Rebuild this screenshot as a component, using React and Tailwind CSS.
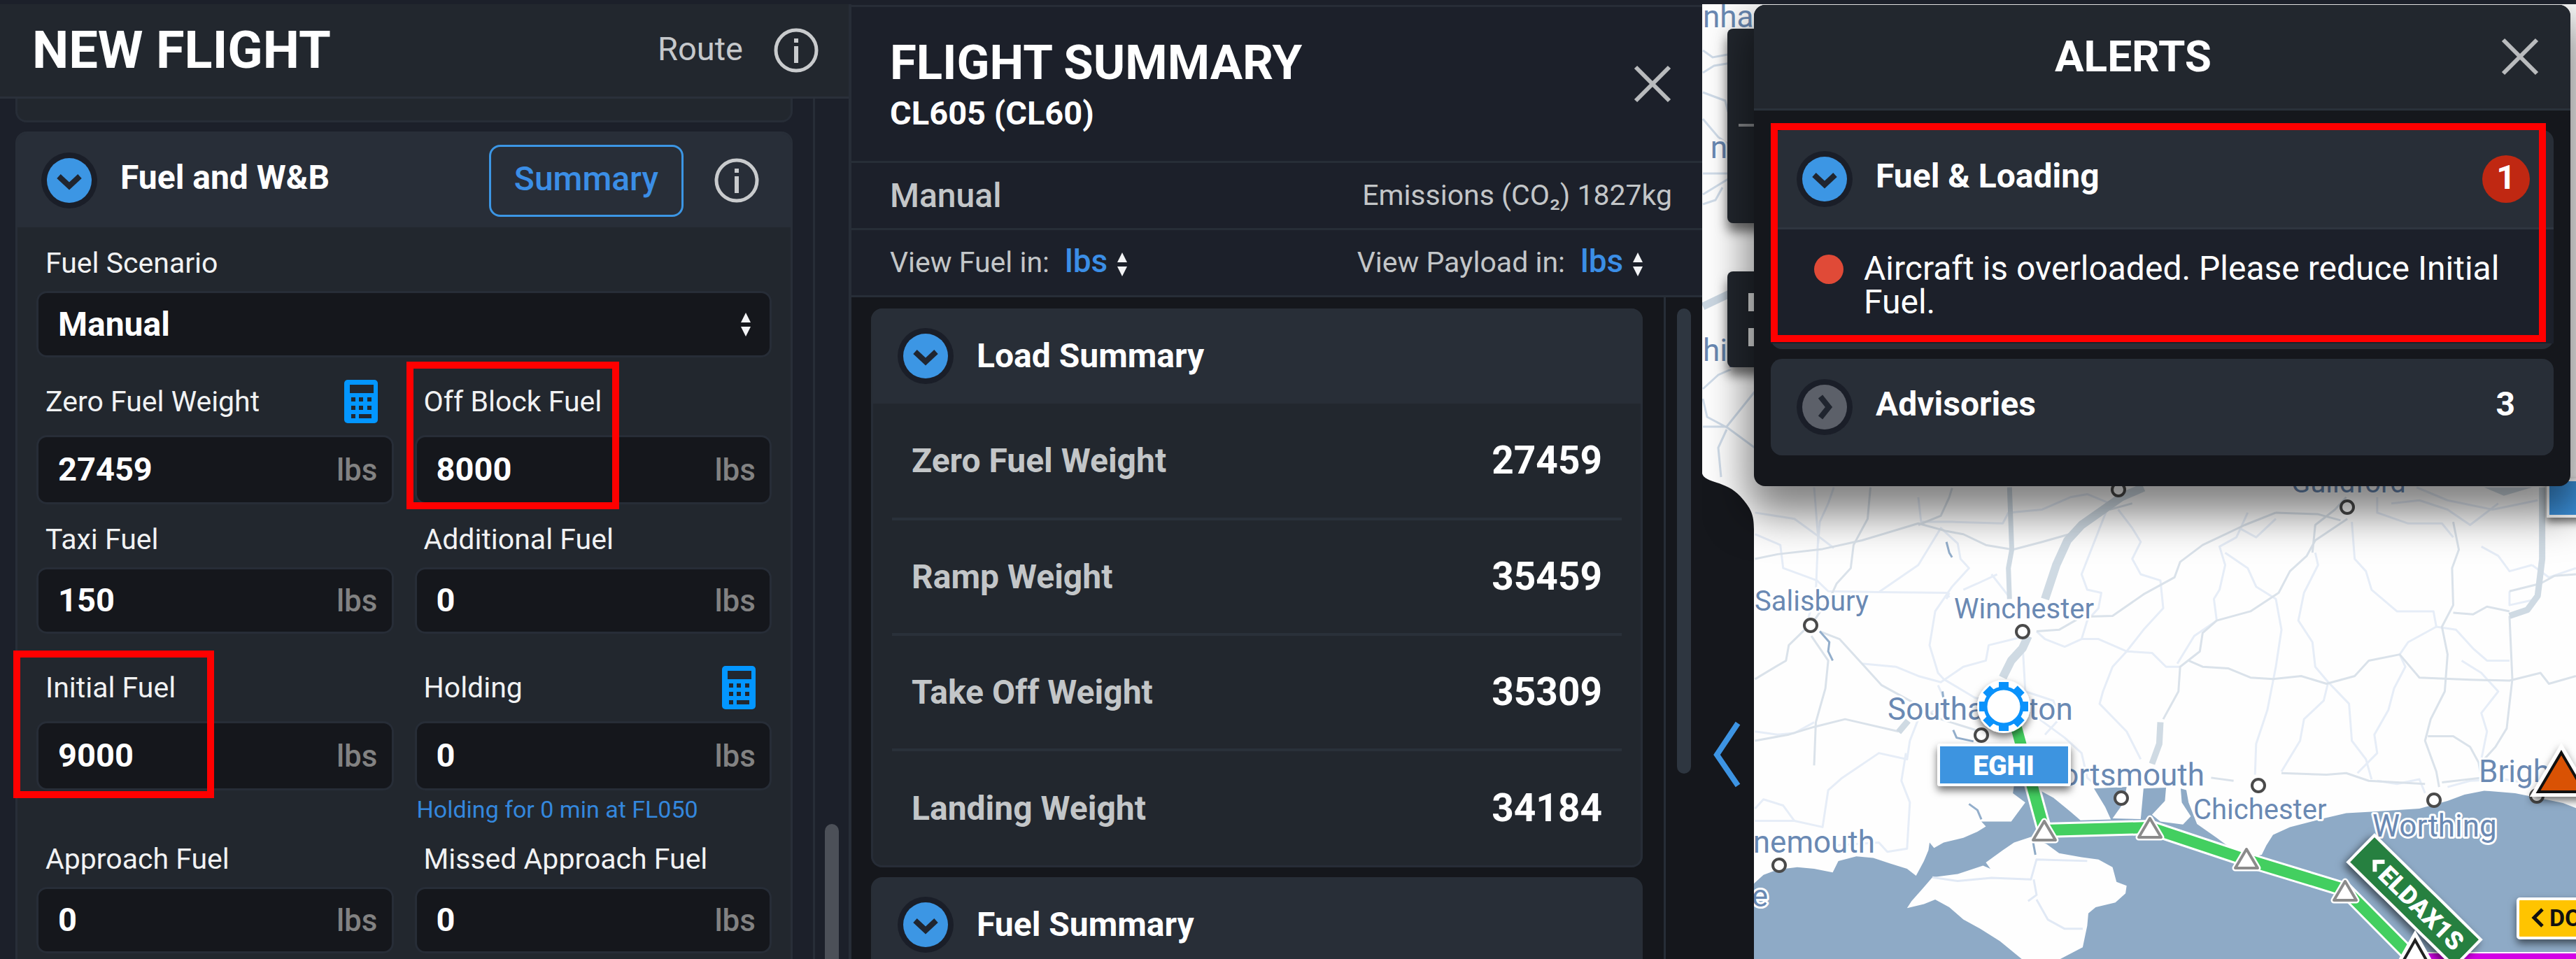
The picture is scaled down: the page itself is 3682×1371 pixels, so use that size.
import React from 'react';

function SortArrows() {
  return (
    <svg viewBox="0 0 16 34" className="pointer-events-none h-[34px] w-4 shrink-0" fill="#f3f4f6" aria-hidden="true">
      <path d="M8 0 L15 14 H1 Z M8 34 L15 20 H1 Z" />
    </svg>
  );
}

function InfoIcon() {
  return (
    <svg viewBox="0 0 66 66" className="size-[66px]" aria-hidden="true">
      <circle cx="33" cy="33" r="29" fill="none" stroke="#c9cbcd" strokeWidth="5" />
      <path d="M33 16 V22 M33 27 V51" stroke="#c9cbcd" strokeWidth="6" />
    </svg>
  );
}

function CloseIcon() {
  return (
    <svg viewBox="0 0 54 54" className="size-[54px]" aria-hidden="true">
      <path d="M3 3 L51 51 M51 3 L3 51" stroke="#b9bbbd" strokeWidth="6" />
    </svg>
  );
}

function Toggle({ open = true }) {
  return (
    <svg viewBox="0 0 80 80" className="size-20 shrink-0" aria-hidden="true">
      <circle cx="40" cy="40" r="40" fill="#1a1e28" />
      <circle cx="40" cy="40" r="32" fill={open ? '#3c96e4' : '#5c6069'} />
      <path d={open ? 'M25 34 L40 48 L55 34' : 'M34 25 L46 40 L34 55'} fill="none" stroke="#20252f" strokeWidth="8" />
    </svg>
  );
}

function Calculator() {
  return (
    <svg viewBox="0 0 48 62" className="h-[62px] w-12" aria-hidden="true">
      <rect width="48" height="62" rx="5" fill="#0396ff" />
      <rect x="8" y="7" width="34" height="12" fill="#22272f" />
      <g fill="#22272f">
        {[25, 37].map((y) => [10, 21, 33].map((x) => <rect key={`${x}-${y}`} x={x} y={y} width="6" height="6" />))}
        <rect x="10" y="49" width="6" height="6" />
        <rect x="21" y="49" width="18" height="6" />
      </g>
    </svg>
  );
}

function Field({ id, label, value, calc, tall, marked, note }) {
  return (
    <div className="relative">
      <div className={`mb-[19px] flex items-center justify-between pr-5 pl-2.5 ${tall ? 'h-16' : 'h-12'}`}>
        <label htmlFor={id} className="text-[41px] leading-[48px] whitespace-nowrap text-[#f1f2f3]">{label}</label>
        {calc && <button type="button" aria-label={`${label} calculator`}><Calculator /></button>}
      </div>
      <div className={`flex items-center rounded-xl bg-[#15171c] pr-5 pl-7 ring-3 ring-[#272d37] ${tall ? 'h-[93px]' : 'h-[89px]'}`}>
        <input id={id} defaultValue={value} className="min-w-0 flex-1 bg-transparent text-[47px] font-bold text-white outline-none" />
        <span className="text-[44px] font-medium text-[#828282]">lbs</span>
      </div>
      {note && <p className="mt-[10px] h-10 text-[34px] leading-10 whitespace-nowrap text-[#3487dd]">{note}</p>}
      {marked === 'wide' && <div className="pointer-events-none absolute -top-[25px] -left-[15px] h-[211px] w-[304px] border-[10px] border-[#ff0000]" />}
      {marked === 'left' && <div className="pointer-events-none absolute -top-[21px] -left-[36px] h-[211px] w-[287px] border-[10px] border-[#ff0000]" />}
    </div>
  );
}

function FuelPanel() {
  return (
    <section className="flex min-h-0 min-w-0 flex-col border-r-4 border-[#272d37]">
      <header className="flex h-[135px] shrink-0 items-center justify-between border-b-3 border-[#2a303a] bg-[#22272e] pr-[42px] pl-[46px]">
        <h1 className="text-[74px] leading-none font-bold text-white">NEW FLIGHT</h1>
        <div className="flex items-center gap-[43px]">
          <a href="#route" className="pb-1 text-[47px] text-[#c5c8cb]">Route</a>
          <button type="button" aria-label="Route information"><InfoIcon /></button>
        </div>
      </header>
      <div className="flex min-h-0 flex-1">
        <div className="min-w-0 flex-1 overflow-hidden border-r-3 border-[#272d37] pr-[29px] pl-[22px]">
          <div className="h-[34px] rounded-b-2xl border-3 border-t-0 border-[#272d37] bg-[#22272e]" />
          <div className="mt-[13px] rounded-2xl border-3 border-[#282e38] bg-[#22272e]">
            <div className="flex h-[134px] items-center rounded-t-xl bg-[#282e38] pr-11 pl-[34px]">
              <Toggle />
              <h2 className="ml-[33px] flex-1 pb-2 text-[48px] leading-[56px] font-bold text-white">Fuel and W&amp;B</h2>
              <button type="button" className="h-[103px] rounded-2xl border-3 border-[#3c96e4] px-[33px] pb-1 text-[48px] font-medium text-[#3b8ee6]">Summary</button>
              <button type="button" aria-label="Fuel information" className="ml-[43px]"><InfoIcon /></button>
            </div>
            <div className="px-[30px] pt-[27px] pb-12">
              <label htmlFor="scenario" className="mb-[19px] block pl-2.5 text-[41px] leading-[48px] text-[#f1f2f3]">Fuel Scenario</label>
              <div className="relative flex h-[89px] items-center rounded-xl bg-[#15171c] ring-3 ring-[#272d37]">
                <select id="scenario" className="h-full w-full appearance-none bg-transparent pl-7 text-[48px] font-bold text-white outline-none">
                  <option>Manual</option>
                </select>
                <div className="pointer-events-none absolute right-[26px]"><SortArrows /></div>
              </div>
              <div className="mt-[34px] grid grid-cols-2 gap-9">
                <Field id="zfw" label="Zero Fuel Weight" value="27459" calc tall />
                <Field id="obf" label="Off Block Fuel" value="8000" tall marked="wide" />
              </div>
              <div className="mt-[29px] grid grid-cols-2 gap-9">
                <Field id="taxi" label="Taxi Fuel" value="150" />
                <Field id="additional" label="Additional Fuel" value="0" />
              </div>
              <div className="mt-12 grid grid-cols-2 gap-9">
                <Field id="initial" label="Initial Fuel" value="9000" tall marked="left" />
                <Field id="holding" label="Holding" value="0" calc tall note="Holding for 0 min at FL050" />
              </div>
              <div className="mt-[27px] grid grid-cols-2 gap-9">
                <Field id="approach" label="Approach Fuel" value="0" />
                <Field id="missed" label="Missed Approach Fuel" value="0" />
              </div>
            </div>
          </div>
        </div>
        <div className="flex w-12 flex-col items-center">
          <div className="grow-[1036]" />
          <div className="w-5 grow-[193] rounded-t-full bg-[#4c5058]" />
        </div>
      </div>
    </section>
  );
}

const WEIGHTS = [
  ['Zero Fuel Weight', '27459'],
  ['Ramp Weight', '35459'],
  ['Take Off Weight', '35309'],
  ['Landing Weight', '34184'],
];

function UnitPicker({ id, label }) {
  return (
    <div className="flex items-center">
      <label htmlFor={id} className="text-[41px] text-[#c3c6c8]">{label}</label>
      <select id={id} className="ml-[22px] appearance-none bg-transparent pb-1 text-[46px] font-medium text-[#3b8ee6] outline-none">
        <option>lbs</option>
      </select>
      <div className="ml-3 pt-1"><SortArrows /></div>
    </div>
  );
}

function SummaryHeading({ children }) {
  return (
    <div className="flex h-[136px] items-center rounded-t-2xl bg-[#282e37] pl-[38px]">
      <Toggle />
      <h3 className="ml-[33px] text-[48px] leading-[56px] font-bold text-white">{children}</h3>
    </div>
  );
}

function SummaryPanel() {
  return (
    <section className="mt-px flex min-h-0 min-w-0 flex-col border-t-3 border-[#272d37]">
      <header className="flex h-[223px] shrink-0 items-center justify-between border-b-3 border-[#272e37] pr-11 pl-[55px]">
        <div className="pt-1">
          <h2 className="text-[69px] leading-[80px] font-bold text-white">FLIGHT SUMMARY</h2>
          <p className="text-[47px] leading-[64px] font-bold text-white">CL605 (CL60)</p>
        </div>
        <button type="button" aria-label="Close flight summary"><CloseIcon /></button>
      </header>
      <div className="flex h-24 shrink-0 items-center justify-between border-b-3 border-[#272e37] pr-[43px] pl-[55px]">
        <span className="text-[48px] font-medium text-[#c3c6c8]">Manual</span>
        <span className="text-[41px] text-[#c3c6c8]">Emissions (CO₂) 1827kg</span>
      </div>
      <div className="flex h-24 shrink-0 items-center justify-between border-b-3 border-[#272e37] pr-[84px] pl-[55px]">
        <UnitPicker id="fuel-unit" label="View Fuel in:" />
        <UnitPicker id="payload-unit" label="View Payload in:" />
      </div>
      <div className="flex min-h-0 flex-1 bg-[#15171c]">
        <div className="min-w-0 flex-1 overflow-hidden border-r-3 border-[#272d37] pt-4 pr-[30px] pl-[28px]">
          <div className="rounded-2xl bg-[#22272e]">
            <SummaryHeading>Load Summary</SummaryHeading>
            <div className="rounded-b-2xl border-3 border-t-0 border-[#272d37] px-[27px]">
              <table className="w-full">
                <tbody className="divide-y-4 divide-[#2a313a]">
                  {WEIGHTS.map(([label, value]) => (
                    <tr key={label} className="h-[165px]">
                      <th scope="row" className="pl-7 text-left text-[48px] font-bold text-[#c3c6c8]">{label}</th>
                      <td className="pr-7 text-right text-[55px] font-bold text-white">{value}</td>
                    </tr>
                  ))}
                </tbody>
              </table>
            </div>
          </div>
          <div className="mt-[14px] rounded-2xl">
            <SummaryHeading>Fuel Summary</SummaryHeading>
          </div>
        </div>
        <div className="flex w-[52px] flex-col items-center pt-4">
          <div className="w-5 grow-[664] rounded-full bg-[#2e3640]" />
          <div className="grow-[264]" />
        </div>
      </div>
    </section>
  );
}

const SEA = 'M100 1340 L110 1320 L125 1295 L150 1278 L185 1270 L215 1275 L248 1287 L258 1250 L290 1235 L320 1240 L350 1258 L380 1275 L396 1298 L410 1250 L418 1215 L420 1190 L428 1208 L445 1190 L480 1175 L505 1155 L520 1138 L512 1122 L565 1122 L590 1060 L568 1030 L570 1005 L600 1005 L640 1045 L670 1090 L688 1118 L742 1115 L732 1075 L712 1015 L770 1010 L765 1060 L745 1112 L795 1114 L800 1015 L840 1012 L838 1055 L815 1100 L830 1122 L870 1132 L884 1105 L868 1060 L866 1015 L876 1020 L880 1060 L895 1130 L930 1175 L945 1195 L985 1240 L1010 1230 L1018 1200 L1030 1165 L1060 1140 L1120 1112 L1160 1095 L1210 1090 L1290 1080 L1340 1055 L1370 1035 L1405 1022 L1460 1030 L1500 1045 L1545 1062 L1570 1080 V1570 H100 Z';
const ISLE = 'M600 1172 L628 1195 L650 1225 L690 1238 L720 1245 L745 1270 L752 1318 L770 1330 L768 1355 L750 1385 L715 1400 L702 1420 L700 1460 L692 1530 L650 1570 L585 1570 L545 1510 L510 1470 L480 1440 L455 1400 L430 1375 L410 1390 L380 1403 L388 1380 L410 1335 L425 1303 L470 1292 L515 1265 L528 1275 L520 1255 L550 1215 L570 1190 Z';

const MAIN_ROADS = [
  'M110 270 L150 255 L230 238 L300 210 L400 155 L450 180 L480 190 L520 225 L568 240 L620 215 L668 190',
  'M315 38 L310 140 L285 225 L280 300 L255 350 L245 390 L215 470 L170 550 L165 600 L110 660',
  'M225 505 L260 530 L300 610 L335 680 L390 735 L440 790 L510 830',
  'M210 520 L240 600 L235 690 L218 800 L215 940',
  'M1162 140 L1105 210 L1090 260 L1060 310 L1040 380 L990 440 L930 470 L905 510 L900 570 L865 620 L862 700 L835 790',
  'M1160 70 L1140 110 L1105 160 L1100 250',
  'M780 90 L740 110 M1035 120 L980 160 L905 225 L865 280 L855 330 L800 385 L745 455 L690 458 L650 500 L610 505',
  'M880 600 L905 620 L950 625 L990 655 L1030 660 L1080 650 L1125 675 L1175 650 L1200 600 L1255 580 L1290 655 L1380 662 L1450 665 L1505 640 L1520 675 L1568 650',
  'M1350 150 L1360 240 L1348 300 L1350 420 L1330 490 L1340 580 L1335 700 L1310 790 L1300 860 L1320 960 L1325 1010',
  'M1450 455 L1455 660 L1445 820 L1425 880 L1400 930',
  'M1568 320 L1530 325 L1505 350 L1450 375 M1350 445 L1385 450 L1410 425 L1450 440',
  'M1305 845 L1350 845 L1380 880 L1395 930 L1400 980 L1330 995',
  'M920 980 L960 990 M1045 965 L1125 970 L1160 965 L1200 990 L1300 1000',
  'M110 860 L170 840 L215 815 L270 790 L365 830',
  'M400 160 L440 130 L455 70 L460 40',
  'M1035 120 L1110 125 L1150 145',
];
const MINOR_ROADS = [
  'M110 190 L155 225 L160 300 L220 340 L240 375 L330 378 L450 380 L455 395',
  'M215 38 L222 200 L218 380 L205 460',
  'M110 120 L180 140 L225 200 L250 235 M250 38 L240 90 L225 150 L222 220',
  'M330 378 L400 290 L440 170 L470 220 L475 270 L490 300 L460 360 L430 440 L420 550 L435 640 L445 660',
  'M400 70 L405 150 L460 150 L550 155 L560 120 L620 110 L670 70 L700 60 L740 90',
  'M735 110 L690 320 L700 370 L725 380 L720 430 L700 470 L690 530 L660 555 L625 530 L610 505',
  'M755 110 L780 170 L795 215 L780 270 L795 320 L830 340 L835 430 L800 500 L770 570 L745 620 L728 700 L722 740 L770 830 L795 920',
  'M690 530 L720 530 L770 570 L815 575 L840 620 L865 620',
  'M985 120 L965 200 L935 230 L945 290 L935 370 L925 400 L930 470 L890 520 L860 610',
  'M970 170 L1000 200 L1035 140 M945 250 L985 300 L1000 360 L1035 400 L1045 500 L1035 620 L1020 760 L1000 870 L998 970',
  'M1105 250 L1110 290 L1085 380 L1075 470 L1100 540 L1105 620 L1128 670 L1120 730 L1085 790 L1078 860 L1045 960',
  'M1170 150 L1175 270 L1195 310 L1205 370 L1250 440 L1315 440 L1320 490 L1355 500 L1385 560 L1410 600 L1450 600',
  'M1215 70 L1215 120 L1270 155 L1330 155 L1350 200 M1240 90 L1290 80 L1340 110 L1380 160 L1430 90',
  'M1285 38 L1340 80 L1420 110 L1500 80 M1400 230 L1430 260 L1450 310 L1490 290',
  'M1320 490 L1270 540 L1255 580 L1265 620 L1245 690 L1235 760 L1210 840 L1215 900 L1180 965',
  'M1365 600 L1400 640 L1430 700 L1400 770 L1410 830 L1400 920',
  'M1128 670 L1165 740 L1170 860 L1195 920 L1205 985',
  'M300 610 L360 620 L400 650 L440 670 L480 620 L520 600 L525 550 L570 530 L590 520',
  'M445 660 L500 720 L600 770 L660 850 L690 900 L700 980 L720 1010',
  'M435 680 L450 740 L400 790 L385 860 L380 920 L330 900 L265 980 L240 1020 L230 1140 L180 1120',
  'M585 540 L590 700 L640 730 L650 790 L625 840',
  'M110 830 L150 840 L180 835 L215 800 M110 1080 L125 1050 L160 1070 L180 1120 L110 1120',
  'M250 1200 L330 1190 L345 1220 L380 1210 L385 1060 L370 990 L378 900',
  'M540 320 L505 350 L480 370 M530 320 L560 390 M450 400 L455 380',
  'M1450 375 L1450 420 L1500 400 M1490 290 L1520 330 L1568 300',
  'M1215 990 L1250 1000 L1290 985 L1300 1030 M1340 1010 L1380 990 L1440 985 L1490 1000',
];
const ISLE_ROADS = 'M425 1303 L470 1315 L530 1305 L600 1310 L610 1245 L700 1250 M605 1310 L610 1360 L595 1380 M610 1375 L630 1440 L660 1470 L692 1470';
const WEST_ROADS = [
  'M2434 72 L2448 82 L2480 76 M2434 104 L2450 94 L2474 90 M2434 170 L2456 196 L2470 206',
  'M2434 278 L2470 256 M2434 292 L2452 286 L2462 268',
];
const CITIES = [
  [2588, 894], [2891, 903], [2832, 1051], [3032, 1141], [3228, 1123], [3479, 1144], [3626, 1138], [2543, 1237], [3028, 700], [3355, 725],
];
const FIXES = [[2922, 1202], [3073, 1198], [3211, 1242], [3352, 1288]];

function MapView() {
  return (
    <svg viewBox="2433 6 1249 1365" preserveAspectRatio="xMinYMin slice" className="absolute inset-0 h-full w-full font-[Roboto,sans-serif]" role="img" aria-label="Route map of southern England">
      <defs>
        <filter id="lift" x="-30%" y="-50%" width="160%" height="220%">
          <feDropShadow dx="0" dy="6" stdDeviation="6" floodColor="#000" floodOpacity="0.55" />
        </filter>
      </defs>
      <rect x="2433" y="6" width="1249" height="1365" fill="#fefefe" />
      <g transform="translate(2420 680) scale(0.8048 0.4407)" fill="none" strokeLinejoin="round">
        {MINOR_ROADS.map((d) => <path key={d} d={d} stroke="#e6edf7" strokeWidth="3" vectorEffect="non-scaling-stroke" />)}
        {MAIN_ROADS.map((d) => <path key={d} d={d} stroke="#dae2ea" strokeWidth="3" vectorEffect="non-scaling-stroke" />)}
        <g stroke="#cfdae3">
          <path d="M800 38 L760 70 L690 160 L665 210 L645 290 L625 400 M595 520 L585 560 L565 600 L550 655" strokeWidth="12" vectorEffect="non-scaling-stroke" />
          <path d="M562 38 L566 240 L560 300 L562 400" strokeWidth="7" vectorEffect="non-scaling-stroke" />
          <path d="M830 800 L828 870 L815 935 M382 795 L365 832 M1508 38 L1508 270 L1500 390 L1482 435 L1450 455" strokeWidth="9" vectorEffect="non-scaling-stroke" />
        </g>
        <path d="M1405 38 L1440 65 L1490 38 Z" fill="#cfdae3" />
        <path d="M450 215 L455 250 L460 265 M225 505 L242 540 L240 570 L248 600 M443 700 L445 730 M462 825 L468 850 L498 862 M490 1065 L505 1085 L512 1115" stroke="#93aecb" strokeWidth="3" vectorEffect="non-scaling-stroke" />
        <path d={SEA} fill="#8eaac6" />
        <path d={ISLE} fill="#fefefe" />
        <path d={ISLE_ROADS} stroke="#e1e9f5" strokeWidth="3" vectorEffect="non-scaling-stroke" />
        <path d="M604 1190 L608 1230" stroke="#8eaac6" strokeWidth="3" vectorEffect="non-scaling-stroke" />
      </g>
      <g fill="none" stroke="#d0dce9" strokeWidth="3">
        {WEST_ROADS.map((d) => <path key={d} d={d} />)}
        <path d="M2434 248 H2470 M2434 132 L2466 144 L2470 160 M2434 556 L2456 536 L2474 528 M2434 570 L2440 596 L2470 612 L2508 640 M2434 610 H2468 L2508 560 M2468 614 L2456 640 L2460 682" />
        <path d="M2434 438 L2472 420" stroke="#cbd7e2" strokeWidth="11" />
      </g>
      <g fill="#fff" stroke="#4a4a4a" strokeWidth="4">
        {CITIES.map(([x, y]) => <circle key={x} cx={x} cy={y} r="9" />)}
      </g>
      <g fill="#6a89b3" stroke="#fff" strokeWidth="6" strokeLinejoin="round" paintOrder="stroke">
        <g fontSize="40">
          <text x="2508" y="873">Salisbury</text>
          <text x="2793" y="884">Winchester</text>
          <text x="3135" y="1171">Chichester</text>
          <text x="3275" y="704">Guildford</text>
        </g>
        <g fontSize="44">
          <text x="2698" y="1029">Southampton</text>
          <text x="3151" y="1123" textAnchor="end">Portsmouth</text>
          <text x="3391" y="1196">Worthing</text>
          <text x="3543" y="1118">Bright</text>
          <text x="2680" y="1219" textAnchor="end">nemouth</text>
          <text x="2527" y="1296" textAnchor="end">e</text>
          <text x="2434" y="39">nham</text>
          <text x="2469" y="226" textAnchor="end">n</text>
          <text x="2434" y="516">hip</text>
        </g>
      </g>
      <path d="M3460 1368 H3682" stroke="#fff" strokeWidth="14" />
      <path d="M3460 1370 H3682" stroke="#d300e6" strokeWidth="14" />
      <g fill="none" strokeLinejoin="round">
        <path d="M2882 1040 L2922 1187 L3073 1183 L3211 1229 L3352 1272 L3450 1371" stroke="#fff" strokeWidth="22" />
        <path d="M2882 1040 L2922 1187 L3073 1183 L3211 1229 L3352 1272 L3450 1371" stroke="#43cf60" strokeWidth="16" />
      </g>
      {FIXES.map(([x, y]) => (
        <g key={x} transform={`translate(${x} ${y})`} strokeLinejoin="round">
          <path d="M0 -28 L16 -1 H-16 Z" fill="#fff" stroke="#fff" strokeWidth="9" />
          <path d="M0 -28 L16 -1 H-16 Z" fill="#fff" stroke="#8b8b8b" strokeWidth="4" />
        </g>
      ))}
      <g transform="translate(3394 1194) rotate(44.5)">
        <rect width="213" height="54" fill="#28803f" stroke="#fff" strokeWidth="4" filter="url(#lift)" />
        <path d="M37 17 L27 27 L37 37" fill="none" stroke="#fff" strokeWidth="6" />
        <text x="44" y="40" fontSize="36" fontWeight="900" fill="#fff">ELDAX1S</text>
      </g>
      <path d="M3452 1344 L3478 1390 H3426 Z" fill="#fff" stroke="#fff" strokeWidth="14" />
      <path d="M3452 1344 L3478 1390 H3426 Z" fill="#fff" stroke="#222" strokeWidth="4" />
      <g filter="url(#lift)">
        <rect x="3599" y="1285" width="110" height="56" rx="3" fill="#ffc400" stroke="#fff" strokeWidth="4" />
      </g>
      <path d="M3634 1300 L3622 1312 L3634 1324" fill="none" stroke="#111" strokeWidth="5" />
      <text x="3644" y="1324" fontSize="34" fontWeight="700" fill="#111">DO</text>
      <g filter="url(#lift)">
        <path d="M3661 1076 L3694 1132 H3628 Z" fill="#d95204" stroke="#fff" strokeWidth="14" />
      </g>
      <path d="M3661 1076 L3694 1132 H3628 Z" fill="#d95204" stroke="#111" strokeWidth="4" />
      <g transform="translate(2864 1010)">
        <circle r="38" fill="#fff" filter="url(#lift)" />
        {[0, 45, 90, 135, 180, 225, 270, 315].map((a) => <rect key={a} x="-7" y="-35" width="14" height="12" fill="#0a92fb" transform={`rotate(${a})`} />)}
        <circle r="26" fill="#fff" stroke="#0a92fb" strokeWidth="5" />
      </g>
      <rect x="2771" y="1065" width="187" height="57" rx="2" fill="#3d94e0" stroke="#fff" strokeWidth="4" filter="url(#lift)" />
      <text x="2864" y="1108" fontSize="39" fontWeight="900" textAnchor="middle" fill="#fff">EGHI</text>
      <rect x="3642" y="686" width="120" height="52" fill="#3d94e0" stroke="#fff" strokeWidth="4" filter="url(#lift)" />
    </svg>
  );
}

function AlertsPanel() {
  return (
    <aside className="absolute top-px right-2 left-[74px] rounded-2xl bg-[#15171c] shadow-[0_30px_60px_10px_rgba(0,0,0,0.5)]">
      <header className="flex h-[151px] items-center rounded-t-2xl border-b-3 border-[#2a313a] bg-[#22272e] pr-[45px] pl-4">
        <h2 className="flex-1 text-center text-[62px] leading-[72px] font-bold text-white">ALERTS</h2>
        <button type="button" aria-label="Close alerts"><CloseIcon /></button>
      </header>
      <div className="pt-[28px] pr-6 pb-11 pl-6">
        <div className="relative">
          <div className="rounded-2xl bg-[#282e37] pb-2">
            <div className="flex h-[142px] items-center border-b-3 border-[#2f3640] pr-[34px] pl-[37px]">
              <Toggle />
              <h3 className="ml-[33px] flex-1 pb-2 text-[48px] leading-[56px] font-bold text-white">Fuel &amp; Loading</h3>
              <span className="flex size-[68px] items-center justify-center rounded-full bg-[#c02812] pb-1 text-[48px] font-bold text-white">1</span>
            </div>
            <div className="flex h-[163px] items-start gap-[29px] bg-[#1c202a] pt-8 pr-8 pl-[62px]">
              <span className="mt-1 size-[42px] shrink-0 rounded-full bg-[#e04a37]" />
              <p className="text-[48px] leading-[48px] text-white">Aircraft is overloaded. Please reduce Initial Fuel.</p>
            </div>
          </div>
          <div className="pointer-events-none absolute -top-[10px] right-[11px] bottom-[10px] left-0 border-[10px] border-[#ff0000]" />
        </div>
        <div className="mt-[14px] flex h-[138px] items-center rounded-2xl bg-[#282e37] pr-[55px] pl-[37px]">
          <Toggle open={false} />
          <h3 className="ml-[33px] flex-1 pb-2 text-[48px] leading-[56px] font-bold text-white">Advisories</h3>
          <span className="pb-2 text-[48px] font-bold text-white">3</span>
        </div>
      </div>
    </aside>
  );
}

function MapPanel() {
  return (
    <section className="relative min-w-0 overflow-hidden">
      <MapView />
      <div className="absolute top-[35px] left-9 h-[278px] w-28 rounded-lg bg-[#22272e] pt-[136px] pl-4 shadow-[0_12px_16px_rgba(0,0,0,0.55)]">
        <div className="h-1 bg-[#85878a]" />
      </div>
      <div className="absolute top-[382px] left-9 flex h-[137px] w-28 flex-col gap-6 rounded-lg bg-[#22272e] pt-[31px] pl-[30px] shadow-[0_12px_16px_rgba(0,0,0,0.55)]">
        <div className="size-[26px] bg-[#dcdddd]" />
        <div className="size-[26px] bg-[#dcdddd]" />
      </div>
      <button type="button" aria-label="Collapse panel" className="absolute top-[671px] bottom-0 left-0 w-[74px]">
        <svg viewBox="0 0 74 694" preserveAspectRatio="xMinYMin slice" className="h-full w-full" aria-hidden="true">
          <path d="M0 0 C4 14 34 10 54 32 C70 50 74 58 74 80 V694 H0 Z" fill="#15171c" />
          <path d="M51 357 L21 402 L51 446" fill="none" stroke="#3d94e3" strokeWidth="8" />
        </svg>
      </button>
      <AlertsPanel />
    </section>
  );
}

export default function App() {
  return (
    <main className="grid h-screen grid-cols-[1217fr_1216fr_1249fr] grid-rows-[minmax(0,1fr)] overflow-hidden bg-[#1c202a] pt-[6px] font-[Roboto,sans-serif]">
      <FuelPanel />
      <SummaryPanel />
      <MapPanel />
    </main>
  );
}
